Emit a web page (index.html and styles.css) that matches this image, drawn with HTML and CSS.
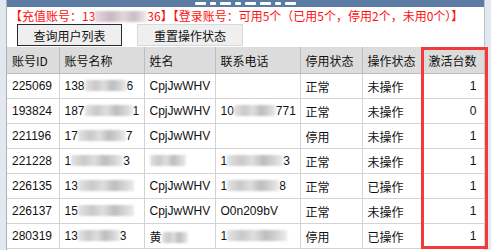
FILE: index.html
```html
<!DOCTYPE html>
<html lang="zh-CN">
<head>
<meta charset="utf-8">
<title>用户列表</title>
<link rel="stylesheet" href="styles.css">
</head>
<body>
<div class="win">
  <div class="titlebar" aria-hidden="true">
    <span class="mark"></span><span class="mark m-s"></span><span class="mark"></span><span class="mark m-s"></span><span class="mark"></span><span class="mark"></span><span class="mark m-s"></span><span class="mark"></span>
  </div>
  <p class="info">【充值账号：13<span class="blur red-blur w52"></span>36】【登录账号：可用5个（已用5个，停用2个，未用0个）】</p>
  <div class="toolbar">
    <button class="btn btn-focus" type="button">查询用户列表</button>
    <button class="btn" type="button">重置操作状态</button>
  </div>
  <div class="grid-wrap">
    <table class="grid">
      <colgroup>
        <col class="c1"><col class="c2"><col class="c3"><col class="c4"><col class="c5"><col class="c6"><col class="c7">
      </colgroup>
      <thead>
        <tr><th>账号ID</th><th>账号名称</th><th>姓名</th><th>联系电话</th><th>停用状态</th><th>操作状态</th><th class="num">激活台数</th></tr>
      </thead>
      <tbody>
        <tr><td>225069</td><td>138<span class="blur w42"></span>6</td><td>CpjJwWHV</td><td></td><td>正常</td><td>未操作</td><td class="num">1</td></tr>
        <tr><td>193824</td><td>187<span class="blur w48"></span>1</td><td>CpjJwWHV</td><td>10<span class="blur w42"></span>771</td><td>正常</td><td>未操作</td><td class="num">0</td></tr>
        <tr><td>221196</td><td>17<span class="blur w48"></span>7</td><td>CpjJwWHV</td><td></td><td>停用</td><td>未操作</td><td class="num">1</td></tr>
        <tr><td>221228</td><td>1<span class="blur w52"></span>3</td><td><span class="blur w36"></span></td><td>1<span class="blur w56"></span>3</td><td>正常</td><td>未操作</td><td class="num">1</td></tr>
        <tr><td>226135</td><td>13<span class="blur w56"></span></td><td>CpjJwWHV</td><td>1<span class="blur w52"></span>8</td><td>正常</td><td>已操作</td><td class="num">1</td></tr>
        <tr><td>226137</td><td>15<span class="blur w56"></span></td><td>CpjJwWHV</td><td>O0n209bV</td><td>正常</td><td>未操作</td><td class="num">1</td></tr>
        <tr><td>280319</td><td>13<span class="blur w42"></span>3</td><td>黄<span class="blur w26"></span></td><td>1<span class="blur w60"></span></td><td>停用</td><td>已操作</td><td class="num">1</td></tr>
      </tbody>
    </table>
    <div class="highlight"></div>
  </div>
</div>
</body>
</html>
```
FILE: styles.css
```css
html, body {
  margin: 0;
  padding: 0;
}
body {
  background: #e3e8ee;
  font-family: "Liberation Sans", "Noto Sans CJK SC", sans-serif;
  font-size: 12px;
  color: #111;
  height: 250px;
  overflow: hidden;
}
.win {
  margin-left: 6px;
  width: 477px;
  height: 250px;
  background: #fff;
  border-left: 1px solid #a7b3c2;
  border-right: 1px solid #b9c2cd;
}
.titlebar {
  height: 7px;
  background: #5b7ba2;
  display: flex;
  align-items: flex-end;
  gap: 4px;
  padding-left: 188px;
  box-sizing: border-box;
  padding-bottom: 2px;
}
.mark {
  width: 11px;
  height: 3px;
  background: #fff;
  border-radius: 1px;
}
.mark.m-s {
  width: 6px;
}
.info {
  margin: 0;
  padding-left: 3px;
  height: 17px;
  line-height: 17px;
  color: #ff1010;
  font-family: "Noto Sans CJK SC", sans-serif;
  font-size: 12px;
  white-space: nowrap;
}
.toolbar {
  display: flex;
  gap: 15px;
  padding-left: 10px;
  height: 23px;
  align-items: flex-start;
}
.btn {
  width: 106px;
  height: 22px;
  margin: 0;
  padding: 0;
  background: #efefef;
  border: 1px solid #d9d9d9;
  font-family: "Noto Sans CJK SC", sans-serif;
  font-size: 12px;
  color: #111;
}
.btn-focus {
  width: 105px;
  border-color: #2a2a2a;
}
.grid-wrap {
  position: relative;
}
.grid {
  width: 477px;
  border-collapse: collapse;
  table-layout: fixed;
}
.c1 { width: 52px; }
.c2 { width: 85px; }
.c3 { width: 71px; }
.c4 { width: 85px; }
.c5 { width: 62px; }
.c6 { width: 60px; }
.c7 { width: 62px; }
.grid th {
  height: 26px;
  background: #dcdcdc;
  border: 1px solid #bdbdbd;
  border-top: 0;
  text-align: left;
  font-weight: normal;
  padding: 0 0 0 5px;
  font-family: "Noto Sans CJK SC", sans-serif;
  white-space: nowrap;
}
.grid td {
  height: 24px;
  border: 1px solid #d3d3d3;
  padding: 0 0 0 5px;
  white-space: nowrap;
  overflow: hidden;
}
.grid tr > :first-child { border-left: 0; }
.grid td.num {
  text-align: right;
  padding: 0 7px 0 0;
}
.grid th.num {
  padding-left: 6px;
}
.blur {
  display: inline-block;
  height: 11px;
  vertical-align: -1px;
  background: linear-gradient(90deg, #e4e4e4 0%, #c9c9c9 25%, #dedede 45%, #bdbdbd 65%, #d6d6d6 85%, #ececec 100%);
  filter: blur(1.2px);
}
.red-blur {
  background: linear-gradient(90deg, #e8d7dc 0%, #c8b8c4 30%, #e2d6da 55%, #c9bdc6 75%, #eee 100%);
}
.w26 { width: 26px; }
.w36 { width: 36px; }
.w42 { width: 42px; }
.w48 { width: 48px; }
.w52 { width: 52px; }
.w56 { width: 56px; }
.w60 { width: 60px; }
.highlight {
  position: absolute;
  left: 414px;
  top: 0;
  width: 61px;
  height: 196px;
  border: 3px solid #f23a3a;
}
```
